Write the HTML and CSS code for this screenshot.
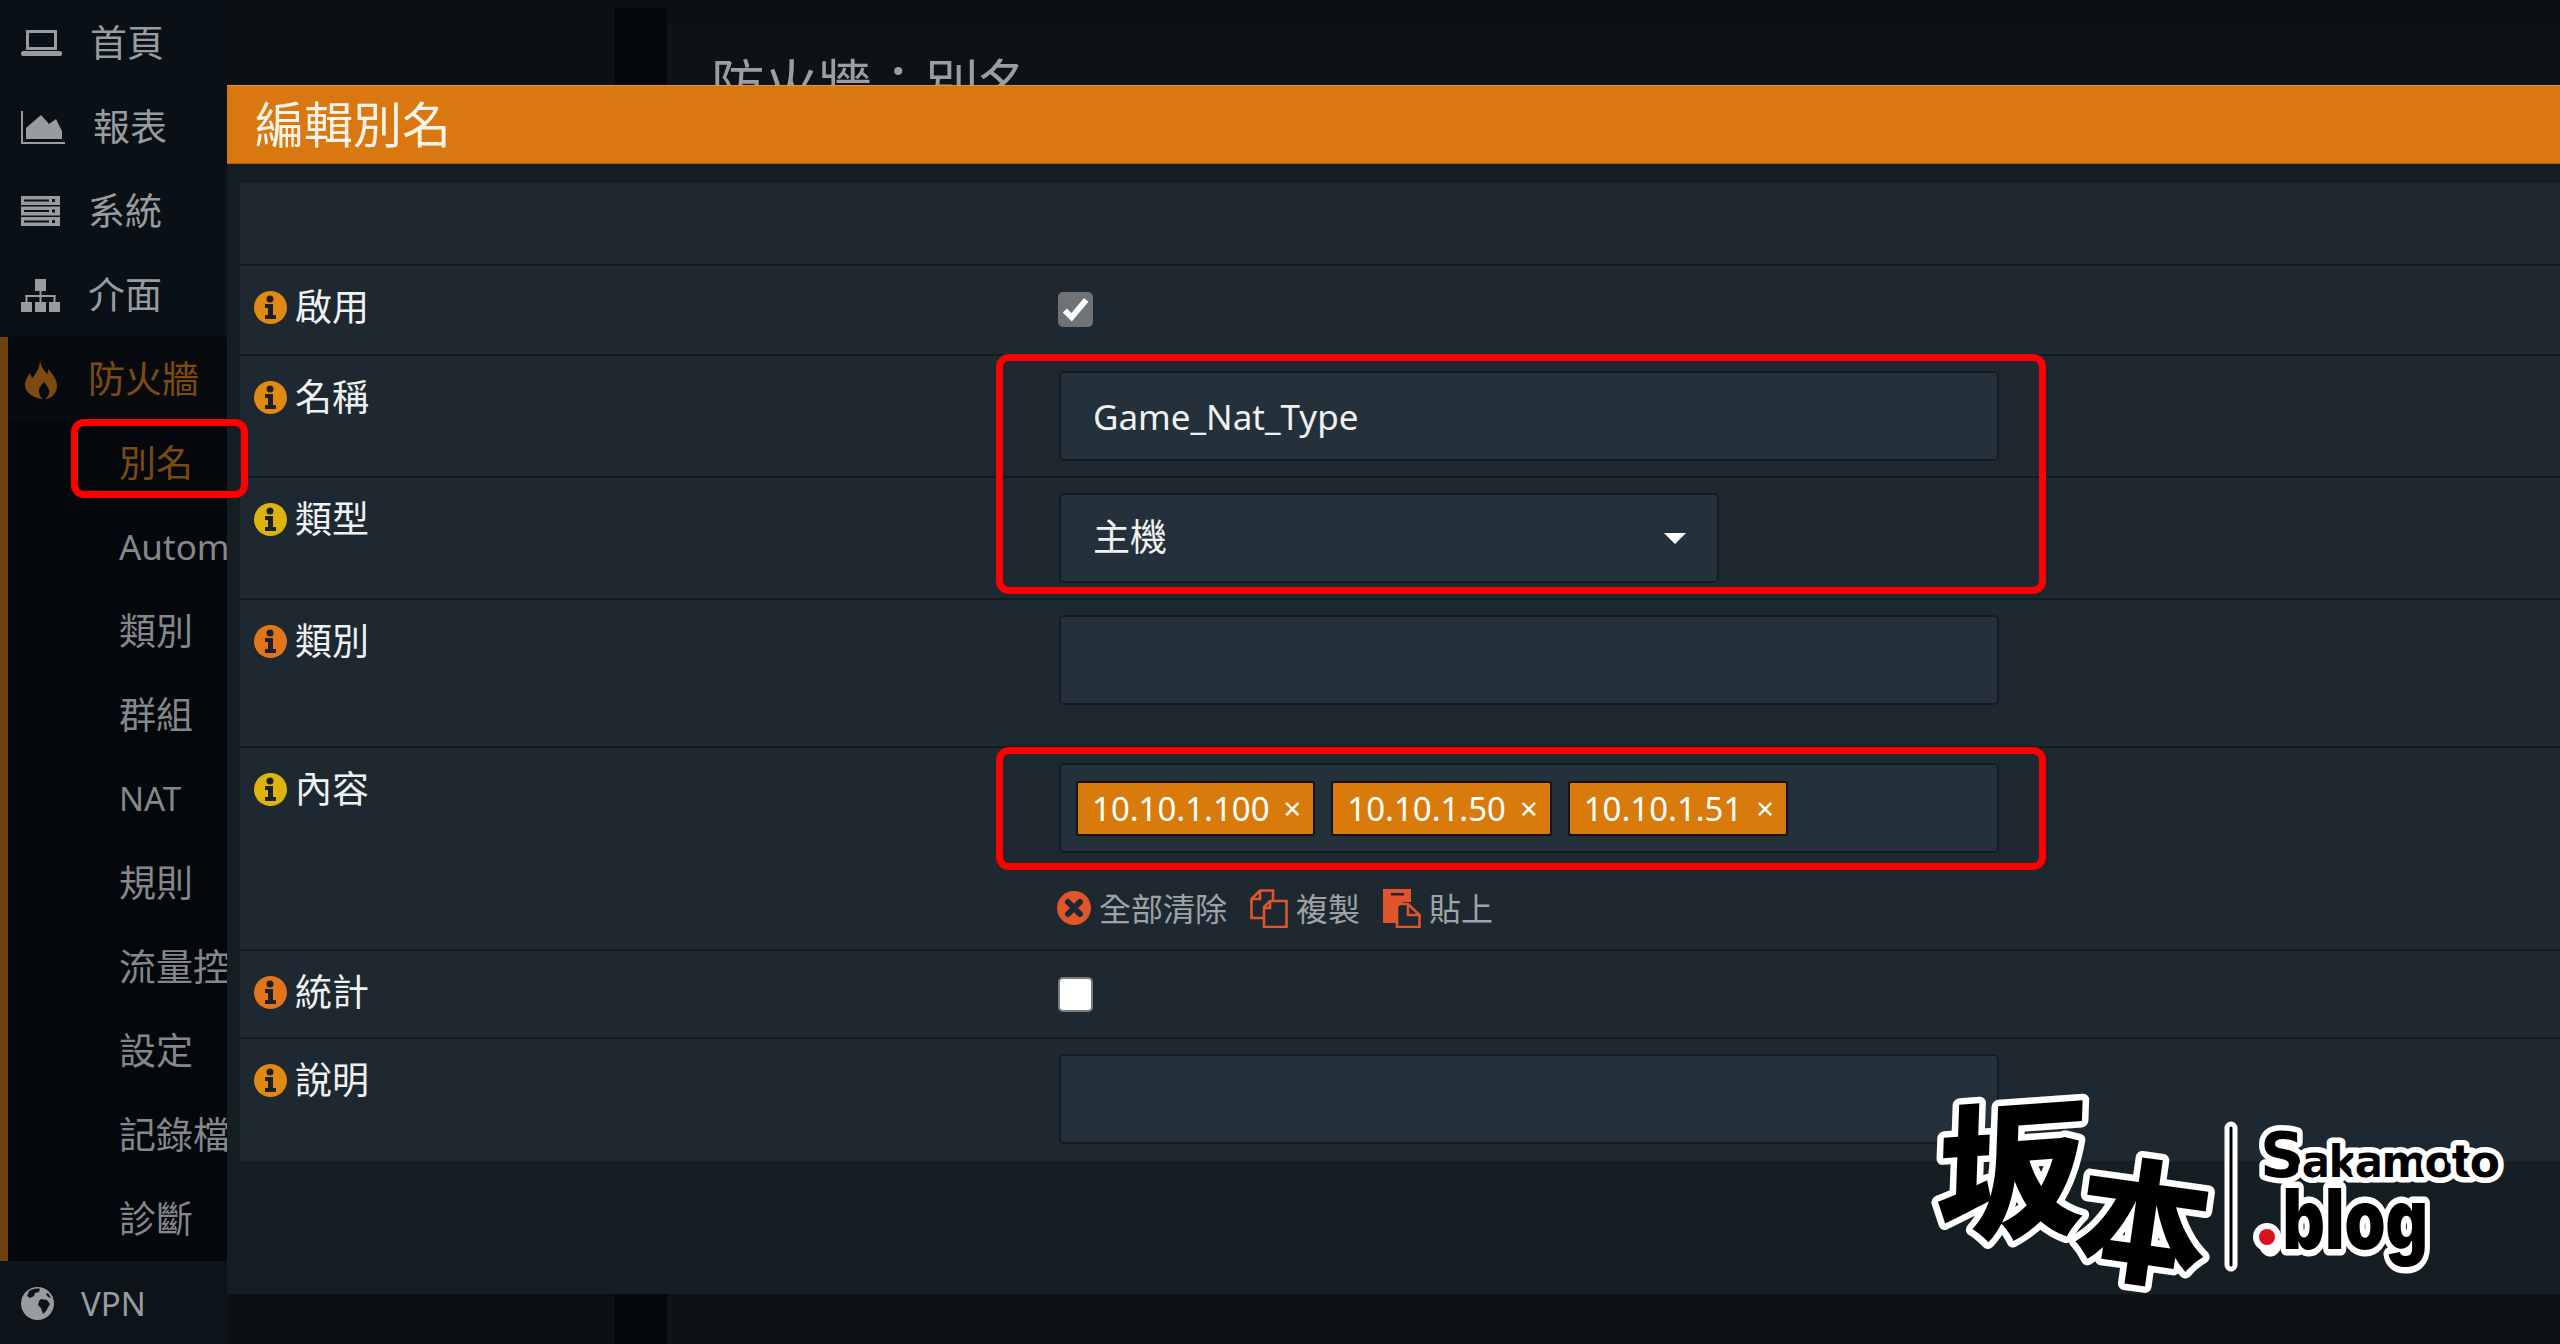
FILE: index.html
```html
<!DOCTYPE html>
<html lang="zh-Hant">
<head>
<meta charset="utf-8">
<title>編輯別名</title>
<link rel="stylesheet" href="styles.css">
</head>
<body>
<div class="page">
  <aside class="sidebar">
    <div class="nav-item">
      <svg class="ico ico-laptop" viewBox="0 0 41 27"><rect x="6.500" y="1.500" width="28" height="17" fill="none" stroke="currentColor" stroke-width="3"/><rect x="0" y="21" width="41" height="5" rx="2" fill="currentColor"/></svg>
      <span>首頁</span>
    </div>
    <div class="nav-item">
      <svg class="ico ico-area" viewBox="0 0 44 33"><path d="M0 0h2v31h42v2H0z" fill="currentColor"/><path d="M5 28V17L20 4l8 9 7-5 6 12v8z" fill="currentColor"/></svg>
      <span>報表</span>
    </div>
    <div class="nav-item">
      <svg class="ico ico-server" viewBox="0 0 39 30"><g fill="currentColor"><rect width="39" height="9" y="0"/><rect width="39" height="9" y="10.500"/><rect width="39" height="9" y="21"/></g><g fill="#0a1116"><rect x="3" y="3.500" width="25" height="2"/><rect x="3" y="14" width="25" height="2"/><rect x="3" y="24.500" width="25" height="2"/><rect x="31" y="3" width="3" height="3"/><rect x="31" y="13.500" width="3" height="3"/><rect x="31" y="24" width="3" height="3"/></g></svg>
      <span>系統</span>
    </div>
    <div class="nav-item">
      <svg class="ico ico-sitemap" viewBox="0 0 39 33"><g fill="currentColor"><rect x="14" y="0" width="11" height="12"/><rect x="0" y="23" width="11" height="10"/><rect x="14" y="23" width="11" height="10"/><rect x="28" y="23" width="11" height="10"/><rect x="18.500" y="12" width="2" height="11"/><rect x="4.500" y="16" width="30" height="2"/><rect x="4.500" y="16" width="2" height="7"/><rect x="32.500" y="16" width="2" height="7"/></g></svg>
      <span>介面</span>
    </div>
    <div class="nav-group">
      <div class="nav-item nav-item-active">
        <svg class="ico ico-fire" viewBox="0 0 32 39"><path fill="currentColor" d="M15 0c1 7 3 9 7 14 1-2 1-3 1-5 5 5 9 11 9 17 0 7-6 13-12 13 3-2 5-5 4-9-1-3-3-5-5-8-2 3-5 5-5 9 0 3 1 6 4 8C10 38 0 34 0 25c0-5 3-9 5-12l2 5c1 0 1-1 2-2 3-4 6-9 6-16z"/></svg>
        <span>防火牆</span>
      </div>
      <div class="nav-sub nav-sub-active">別名</div>
      <div class="nav-sub nav-auto">Autom</div>
      <div class="nav-sub">類別</div>
      <div class="nav-sub">群組</div>
      <div class="nav-sub nav-latin">NAT</div>
      <div class="nav-sub">規則</div>
      <div class="nav-sub">流量控制器</div>
      <div class="nav-sub">設定</div>
      <div class="nav-sub">記錄檔案</div>
      <div class="nav-sub">診斷</div>
    </div>
    <div class="nav-item nav-item-vpn">
      <svg class="ico ico-globe" viewBox="0 0 33 33"><circle cx="16.500" cy="16.500" r="16.500" fill="currentColor"/><path fill="#0c1419" d="M8 4c3-2 8-3 11-2l-1 3-4 1-1 3-4 2-3-2zM20 12l6 1 3 4-4 7-3 3-2-6-3-3 1-4zM27 6l3 5-3-1-2-3z"/></svg>
      <span class="nav-latin">VPN</span>
    </div>
  </aside>
  <main class="main">
    <div class="main-gutter"></div>
    <div class="main-strip"></div>
    <section class="content">
      <h1 class="page-title">防火牆：別名</h1>
    </section>
  </main>
</div>

<div class="modal">
  <header class="modal-head">編輯別名</header>
  <div class="modal-body">
    <div class="form-panel">
      <div class="row row-blank"></div>

      <div class="row row-enable">
        <div class="label">
          <svg class="info info-orange" viewBox="0 0 33 33"><use href="#info-i"/></svg>
          <span>啟用</span>
        </div>
        <div class="control control-check">
          <span class="check check-on">
            <svg viewBox="0 0 36 36"><path d="M7 19l7 7L29 8" fill="none" stroke="#fff" stroke-width="6"/></svg>
          </span>
        </div>
      </div>

      <div class="row row-field">
        <div class="label">
          <svg class="info info-orange" viewBox="0 0 33 33"><use href="#info-i"/></svg>
          <span>名稱</span>
        </div>
        <div class="control">
          <div class="field field-wide field-latin">Game_Nat_Type</div>
        </div>
      </div>

      <div class="row row-field">
        <div class="label">
          <svg class="info info-yellow" viewBox="0 0 33 33"><use href="#info-i"/></svg>
          <span>類型</span>
        </div>
        <div class="control">
          <div class="field field-select"><span class="select-text">主機</span><i class="caret"></i></div>
        </div>
      </div>

      <div class="row row-category">
        <div class="label">
          <svg class="info info-deep" viewBox="0 0 33 33"><use href="#info-i"/></svg>
          <span>類別</span>
        </div>
        <div class="control">
          <div class="field field-wide"></div>
        </div>
      </div>

      <div class="row row-content">
        <div class="label">
          <svg class="info info-yellow" viewBox="0 0 33 33"><use href="#info-i"/></svg>
          <span>內容</span>
        </div>
        <div class="control">
          <div class="field field-wide field-tags">
            <span class="tag">10.10.1.100<b>×</b></span>
            <span class="tag">10.10.1.50<b>×</b></span>
            <span class="tag">10.10.1.51<b>×</b></span>
          </div>
          <div class="actions">
            <span class="action">
              <svg class="act-ico act-clear" viewBox="0 0 34 34"><circle cx="17" cy="17" r="17" fill="currentColor"/><path d="M11 11l12 12M23 11L11 23" stroke="#1e2830" stroke-width="6" stroke-linecap="round"/></svg>
              <span>全部清除</span>
            </span>
            <span class="action">
              <svg class="act-ico act-doc" viewBox="0 0 38 39"><g fill="none" stroke="currentColor" stroke-width="2.600"><path d="M14 29H1.500V10L10 1.500h13V12"/><path d="M10 1.500V10H1.500"/><path d="M14 38V18l6-6h16.500v26z"/><path d="M20 12v7h-6"/></g></svg>
              <span>複製</span>
            </span>
            <span class="action">
              <svg class="act-ico act-doc" viewBox="0 0 38 39"><path fill="currentColor" d="M0 0h28v13H20l-7 7v14H0z"/><rect x="8" y="4" width="13" height="2.500" fill="#1e2830"/><g fill="none" stroke="currentColor" stroke-width="2.600"><path d="M14 38V15h11l11.500 11v12z"/><path d="M25 15v11h11"/></g></svg>
              <span>貼上</span>
            </span>
          </div>
        </div>
      </div>

      <div class="row row-stat">
        <div class="label">
          <svg class="info info-deep" viewBox="0 0 33 33"><use href="#info-i"/></svg>
          <span>統計</span>
        </div>
        <div class="control control-check">
          <span class="check"></span>
        </div>
      </div>

      <div class="row row-field row-last">
        <div class="label">
          <svg class="info info-orange" viewBox="0 0 33 33"><use href="#info-i"/></svg>
          <span>說明</span>
        </div>
        <div class="control">
          <div class="field field-wide"></div>
        </div>
      </div>
    </div>
  </div>
</div>

<div class="mark mark-nav"></div>
<div class="mark mark-top"></div>
<div class="mark mark-tags"></div>

<svg class="logo" viewBox="0 0 600 230" aria-label="坂本 Sakamoto.blog">
  <g class="logo-cjk">
    <text x="22" y="150" font-size="150" transform="rotate(-4 90 90) skewX(-6)">坂</text>
    <text x="152" y="196" font-size="134" transform="rotate(8 220 150)">本</text>
  </g>
  <rect class="logo-bar" x="303" y="47" width="8" height="145" rx="4"/>
  <text class="logo-sm" x="336" y="100" font-size="44" textLength="240" lengthAdjust="spacing"><tspan font-size="62">S</tspan>akamoto</text>
  <text class="logo-blog" x="334" y="172" font-size="84" textLength="170" lengthAdjust="spacingAndGlyphs">.blog</text>
  <circle cx="343" cy="160" r="14" fill="#fff"/>
  <circle cx="343" cy="160" r="8" fill="#d8121f"/>
</svg>

<svg class="defs" width="0" height="0" aria-hidden="true">
  <defs>
    <g id="info-i">
      <circle cx="16.500" cy="16.500" r="16.500" fill="currentColor"/>
      <circle cx="16" cy="8" r="3.500" fill="#1b2128"/>
      <path d="M11 13h8v11h3v4H11v-4h3v-7h-3z" fill="#1b2128"/>
    </g>
  </defs>
</svg>
</body>
</html>
```

FILE: styles.css
```css
* { box-sizing: border-box; }

html, body {
  margin: 0;
  height: 100%;
}

body {
  position: relative;
  width: 2560px;
  height: 1344px;
  overflow: hidden;
  background: #0a1014;
  color: #eceeef;
  font-family: "Noto Sans", "Noto Sans CJK TC", sans-serif;
  font-size: 37px;
}

.page {
  display: flex;
  height: 1344px;
}

/* sidebar */
.sidebar {
  flex: none;
  width: 227px;
  padding-top: 1px;
  overflow: hidden;
  background: #0a1116;
  color: #989c9f;
}

.nav-item {
  display: flex;
  align-items: center;
  height: 84px;
  padding-left: 21px;
  white-space: nowrap;
}

.nav-item span { padding-bottom: 5px; }

.ico { flex: none; display: block; margin-right: 28px; }
.ico-laptop { width: 41px; height: 27px; }
.ico-area { width: 44px; height: 33px; }
.ico-server { width: 39px; height: 30px; }
.ico-sitemap { width: 39px; height: 33px; }
.ico-fire { width: 32px; height: 39px; margin-right: 31px; }
.ico-globe { width: 33px; height: 33px; margin-right: 27px; }

.nav-group {
  border-left: 8px solid #6f430e;
  background: #04070b;
}

.nav-item-active {
  padding-left: 17px;
  background: #070b0f;
  color: #7d4b12;
}

.nav-sub {
  height: 84px;
  padding-left: 111px;
  line-height: 84px;
  white-space: nowrap;
  color: #84888b;
}

.nav-sub-active { color: #7a4a10; }

.nav-latin { font-size: 33px; }

.nav-auto { font-size: 35px; }

.nav-item-vpn { background: #0c1419; }

.nav-item-vpn span { padding-bottom: 0; }

/* page behind the dialog */
.main {
  flex: 1;
  display: flex;
  min-width: 0;
}

.main-gutter {
  flex: none;
  width: 388px;
}

.main-strip {
  flex: none;
  width: 52px;
  margin-top: 8px;
  background: #05080a;
}

.content {
  flex: 1;
  margin-top: 23px;
  padding: 35px 0 0 44px;
  background: #0c1216;
}

.page-title {
  margin: 0;
  font-size: 53.500px;
  font-weight: 400;
  line-height: 52px;
  color: #9a9ea2;
}

/* dialog */
.modal {
  position: absolute;
  left: 227px;
  top: 85px;
  right: 0;
  height: 1209px;
  background: #141e23;
}

.modal-head {
  height: 79px;
  padding-left: 28px;
  background: #d97811;
  border-top: 1px solid #e8962c;
  border-bottom: 1px solid #b05f0c;
  font-size: 49px;
  line-height: 77px;
  color: #fbf3e6;
}

.modal-body { padding: 19px 0 0 13px; }

.form-panel { background: #1e2830; }

.row {
  display: grid;
  grid-template-columns: 820px 1fr;
  border-bottom: 2px solid #141b20;
}

.row-blank { height: 83px; }
.row-enable { height: 90px; }
.row-field { height: 122px; }
.row-category { height: 148px; }
.row-content { height: 203px; }
.row-stat { height: 88px; }
.row-last { border-bottom: 0; }

.label {
  display: flex;
  align-items: center;
  gap: 8px;
  height: 50px;
  margin-top: 16px;
  padding-left: 14px;
  color: #f0f1f2;
}

.label span { padding-bottom: 4px; }

.info {
  flex: none;
  width: 33px;
  height: 33px;
}

.info-orange { color: #e08a14; }
.info-yellow { color: #dcb40f; }
.info-deep { color: #e2741a; }

.control { padding-top: 15px; }
.control-check { padding-top: 26px; }

.check {
  display: block;
  width: 35px;
  height: 35px;
  margin-left: -2px;
  border: 2px solid #777b7e;
  border-radius: 5px;
  background: #fff;
}

.check-on {
  border: 0;
  background: #6f7376;
}

.check-on svg { display: block; width: 35px; height: 35px; }

.field {
  display: flex;
  align-items: center;
  height: 90px;
  margin-left: -1px;
  padding: 0 32px;
  border: 2px solid #151b20;
  border-radius: 5px;
  background: #25313a;
  color: #f0f1f2;
}

.field-wide { width: 940px; }

.field-latin { font-size: 35px; }

.field-select {
  justify-content: space-between;
  width: 660px;
  padding-right: 31px;
}

.select-text { padding-bottom: 6px; }

.caret {
  width: 0;
  height: 0;
  border-left: 11px solid transparent;
  border-right: 11px solid transparent;
  border-top: 11px solid #fff;
}

.field-tags {
  gap: 16px;
  padding: 0 15px;
}

.tag {
  display: flex;
  align-items: center;
  height: 55px;
  padding: 0 12px 0 14px;
  border: 2px solid #15130f;
  border-radius: 3px;
  background: #d97b0c;
  color: #fff;
  font-size: 33px;
  white-space: nowrap;
}

.tag b {
  margin-left: 14px;
  font-weight: 400;
  font-size: 31px;
}

.actions {
  display: flex;
  align-items: center;
  gap: 23px;
  height: 76px;
  margin-top: 17px;
  color: #9ea3a6;
  font-size: 32px;
}

.action {
  display: flex;
  align-items: center;
  gap: 8px;
  white-space: nowrap;
}

.action span { padding-bottom: 3px; }

.act-ico {
  flex: none;
  color: #e0552b;
}

.act-clear { width: 34px; height: 34px; margin-left: -3px; }
.act-doc { width: 38px; height: 39px; }

/* red callouts drawn on top of the shot */
.mark {
  position: absolute;
  border: 7px solid #f00;
  border-radius: 13px;
}

.mark-nav { left: 71px; top: 419px; width: 177px; height: 79px; }
.mark-top { left: 996px; top: 354px; width: 1050px; height: 240px; }
.mark-tags { left: 996px; top: 747px; width: 1050px; height: 123px; }

/* watermark */
.logo {
  position: absolute;
  left: 1924px;
  top: 1077px;
  width: 600px;
  height: 230px;
}

.logo text {
  fill: #000;
  stroke: #fff;
  paint-order: stroke;
  stroke-linejoin: round;
}

.logo-cjk text {
  font-family: "Noto Sans CJK TC", sans-serif;
  font-weight: 900;
  stroke-width: 13px;
}

.logo-bar {
  fill: #000;
  stroke: #fff;
  stroke-width: 5px;
}

.logo-sm {
  font-family: "DejaVu Sans", sans-serif;
  font-weight: 700;
  stroke-width: 11px;
}

.logo-blog {
  font-family: "Inter", "DejaVu Sans", sans-serif;
  font-weight: 900;
  stroke-width: 13px;
}

.defs { position: absolute; }
```
